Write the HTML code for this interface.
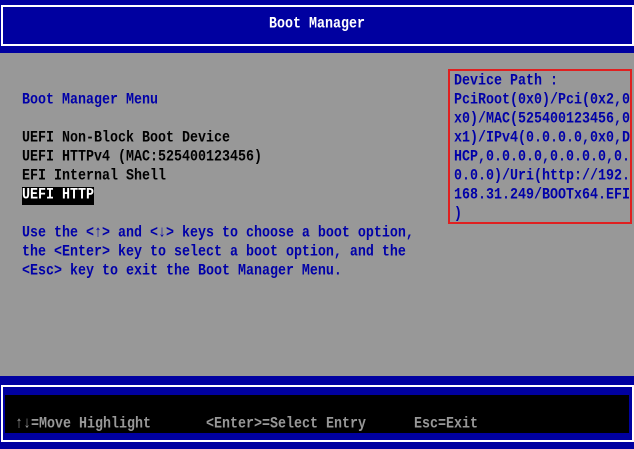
<!DOCTYPE html>
<html><head><meta charset="utf-8"><style>
*{margin:0;padding:0}
body{width:634px;height:449px;background:#989898;position:relative;overflow:hidden;font-family:"Liberation Mono","DejaVu Sans Mono",monospace;font-size:13.33px;line-height:19px;font-weight:bold}
.t{position:absolute;white-space:pre;transform:scaleY(1.2);transform-origin:0 50%}
.b{color:#0000a8}
.k{color:#000}
</style></head><body>
<div style="position:absolute;left:0;top:0;width:634px;height:53px;background:#0000a0"></div>
<div style="position:absolute;left:1px;top:5px;width:629px;height:37px;border:2px solid #fff"></div>
<div class="t" style="left:0;width:634px;text-align:center;top:15px;color:#fff">Boot Manager</div>

<div class="t b" style="left:22px;top:91px">Boot Manager Menu</div>
<div class="t k" style="left:22px;top:129px">UEFI Non-Block Boot Device</div>
<div class="t k" style="left:22px;top:148px">UEFI HTTPv4 (MAC:525400123456)</div>
<div class="t k" style="left:22px;top:167px">EFI Internal Shell</div>
<div style="position:absolute;left:22px;top:187px;width:72px;height:18px;background:#000"></div>
<div class="t" style="left:22px;top:186px;color:#fff">UEFI HTTP</div>
<div class="t b" style="left:22px;top:224px">Use the &lt;↑&gt; and &lt;↓&gt; keys to choose a boot option,</div>
<div class="t b" style="left:22px;top:243px">the &lt;Enter&gt; key to select a boot option, and the</div>
<div class="t b" style="left:22px;top:262px">&lt;Esc&gt; key to exit the Boot Manager Menu.</div>

<div style="position:absolute;left:448px;top:69px;width:180px;height:151px;border:2px solid #e02020"></div>
<div class="t b" style="left:454px;top:72px">Device Path :</div>
<div class="t b" style="left:454px;top:91px">PciRoot(0x0)/Pci(0x2,0</div>
<div class="t b" style="left:454px;top:110px">x0)/MAC(525400123456,0</div>
<div class="t b" style="left:454px;top:129px">x1)/IPv4(0.0.0.0,0x0,D</div>
<div class="t b" style="left:454px;top:148px">HCP,0.0.0.0,0.0.0.0,0.</div>
<div class="t b" style="left:454px;top:167px">0.0.0)/Uri(http://192.</div>
<div class="t b" style="left:454px;top:186px">168.31.249/BOOTx64.EFI</div>
<div class="t b" style="left:454px;top:205px">)</div>

<div style="position:absolute;left:0;top:376px;width:634px;height:73px;background:#0000a0"></div>
<div style="position:absolute;left:1px;top:385px;width:629px;height:53px;border:2px solid #fff"></div>
<div style="position:absolute;left:5px;top:395px;width:624px;height:38px;background:#000"></div>
<div class="t" style="left:15px;top:415px;color:#989898">↑↓=Move Highlight</div>
<div class="t" style="left:206px;top:415px;color:#989898">&lt;Enter&gt;=Select Entry</div>
<div class="t" style="left:414px;top:415px;color:#989898">Esc=Exit</div>
</body></html>
